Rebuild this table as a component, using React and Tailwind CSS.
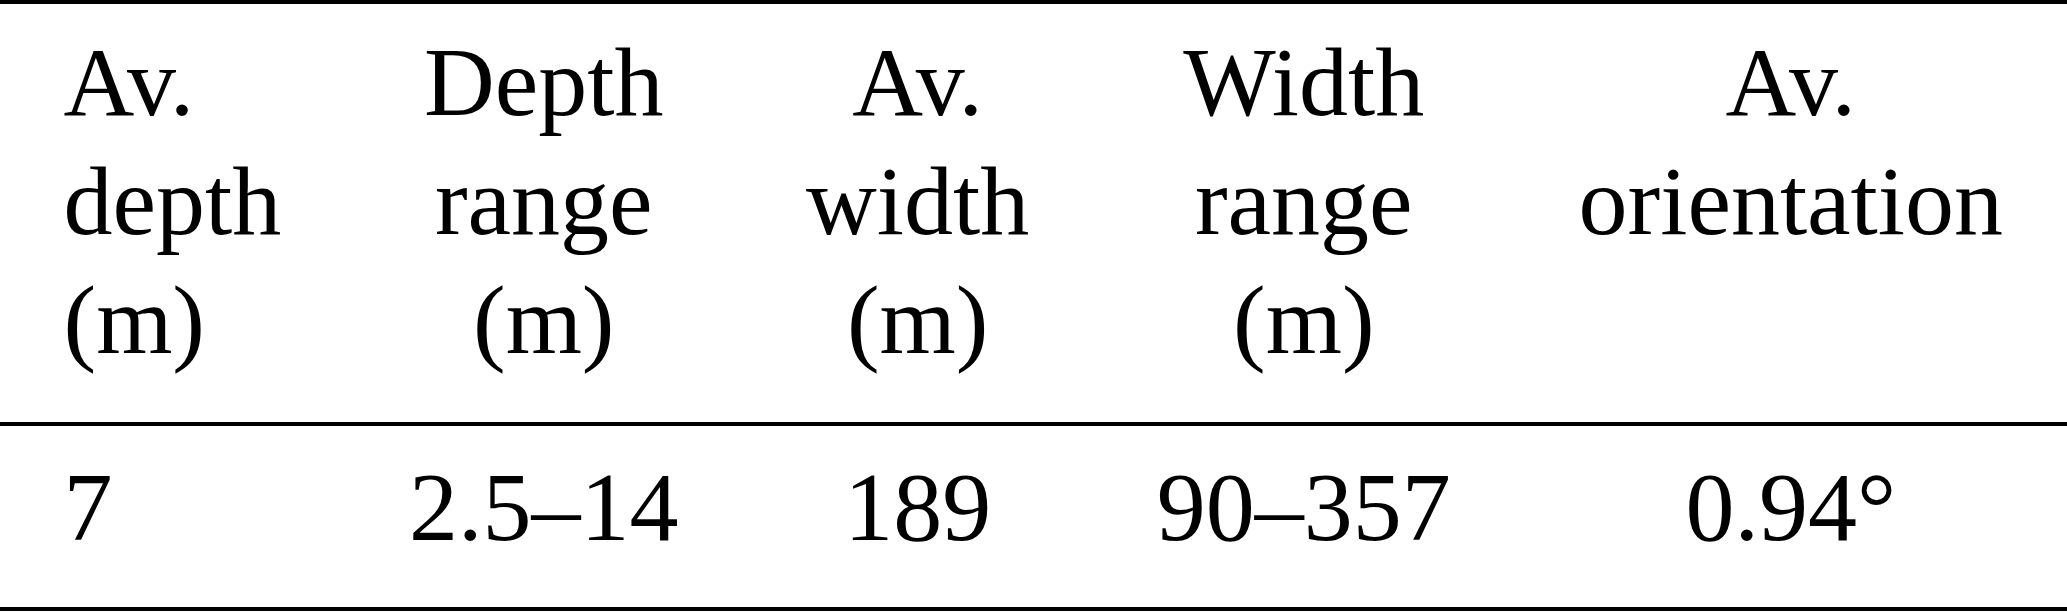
import React from "react";

const header = [
  { lines: ["Av.", "depth", "(m)"], align: "text-left" },
  { lines: ["Depth", "range", "(m)"], align: "text-center" },
  { lines: ["Av.", "width", "(m)"], align: "text-center" },
  { lines: ["Width", "range", "(m)"], align: "text-center" },
  { lines: ["Av.", "orientation"], align: "text-center" },
];

const row = [
  { v: "7", align: "text-left" },
  { v: "2.5–14", align: "text-center" },
  { v: "189", align: "text-center" },
  { v: "90–357", align: "text-center" },
  { v: "0.94°", align: "text-center" },
];

export default function App() {
  return (
    <div className="w-[2067px] h-[612px] bg-white overflow-hidden text-black font-['Liberation_Serif','Times_New_Roman',serif]">
      <table className="w-full border-collapse text-[98px] leading-[119px]">
        <thead>
          <tr className="border-t-[4px] border-b-[4px] border-black">
            {header.map((h, i) => (
              <th
                key={i}
                className={`${h.align} font-normal align-top px-[63.5px] pt-[19px] pb-[42px] whitespace-nowrap`}
              >
                {h.lines.map((l, j) => (
                  <div key={j}>{l}</div>
                ))}
                {h.lines.length < 3 && <div>&nbsp;</div>}
              </th>
            ))}
          </tr>
        </thead>
        <tbody>
          <tr className="border-b-[4px] border-black">
            {row.map((c, i) => (
              <td
                key={i}
                className={`${c.align} align-top px-[63.5px] pt-[22px] pb-[40px] whitespace-nowrap`}
              >
                {c.v}
              </td>
            ))}
          </tr>
        </tbody>
      </table>
    </div>
  );
}
